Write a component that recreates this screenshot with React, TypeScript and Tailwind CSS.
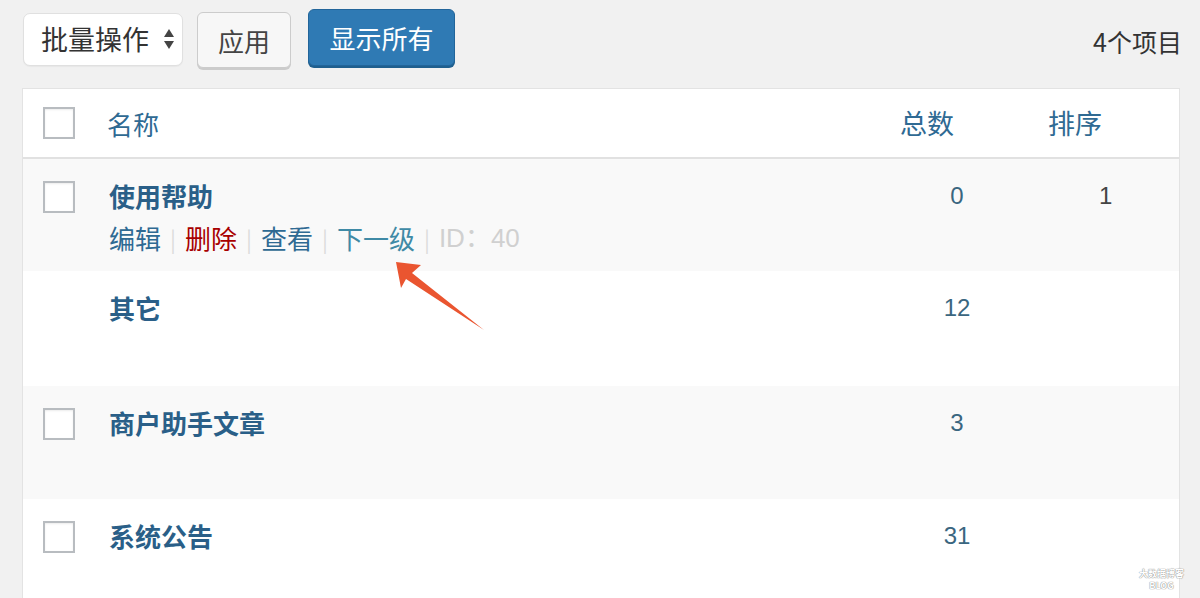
import React from "react";

const font = { fontFamily: '"Noto Sans CJK SC", "Noto Sans", sans-serif' };

function Box() {
  return (
    <div className="w-[32px] h-[32px] border-2 border-[#b8bcc0] bg-white shadow-[inset_0_1px_2px_rgba(0,0,0,0.08)]" />
  );
}

type Row = { name: string; count: string; order?: string; check: boolean; actions?: boolean; bg: string; h: string };

const rows: Row[] = [
  { name: "使用帮助", count: "0", order: "1", check: true, actions: true, bg: "bg-[#f9f9f9]", h: "h-[112px]" },
  { name: "其它", count: "12", check: false, bg: "bg-white", h: "h-[115px]" },
  { name: "商户助手文章", count: "3", check: true, bg: "bg-[#f9f9f9]", h: "h-[113px]" },
  { name: "系统公告", count: "31", check: true, bg: "bg-white", h: "h-[120px]" },
];

function Sep() {
  return <span className="mx-[9px] text-[#dcdcdc] text-[22px]">|</span>;
}

export default function App() {
  return (
    <div className="relative w-[1200px] h-[598px] overflow-hidden bg-[#f1f1f1] text-[#444]" style={font}>
      <div className="flex items-center h-[80px] pl-[23px] pr-[18px]">
        <div className="flex items-center w-[160px] h-[53px] mt-[-2px] bg-white border border-[#e0e0e0] rounded-[7px] pl-[17px] pr-[7px] justify-between text-[27px] text-[#333] shadow-[0_1px_1px_rgba(0,0,0,0.04)]">
          <span>批量操作</span>
          <svg width="12" height="26" viewBox="0 0 12 26">
            <path d="M6 3 L11 11 L1 11 Z" fill="#444" />
            <path d="M6 23 L11 15 L1 15 Z" fill="#444" />
          </svg>
        </div>
        <div className="ml-[14px] flex items-center justify-center w-[94px] h-[56px] bg-[#f7f7f7] border border-[#cccccc] rounded-[6px] text-[26px] text-[#444] shadow-[0_2px_0_#cccccc]">
          应用
        </div>
        <div className="ml-[17px] mt-[-5px] flex items-center justify-center w-[147px] h-[57px] bg-[#2f7ab4] border border-[#22659a] rounded-[6px] text-[26px] text-white shadow-[0_2px_0_#1f5f8e]">
          显示所有
        </div>
        <div className="ml-auto text-[25px] text-[#333] mt-[4px]">4个项目</div>
      </div>

      <div className="ml-[22px] w-[1158px] mt-[8px] border border-[#e3e3e3] bg-white">
        <div className="flex items-center h-[70px] border-b-2 border-[#e1e1e1]">
          <div className="w-[84px] pl-[20px] flex items-center"><Box /></div>
          <div className="flex-1 text-[26px] text-[#2f6a93]">名称</div>
          <div className="w-[136px] pl-[11px] text-[27px] text-[#2f6a93]">总数</div>
          <div className="w-[154px] pl-[23px] text-[27px] text-[#2f6a93]">排序</div>
        </div>
        {rows.map((r, i) => (
          <div key={i} className={`flex items-start ${r.bg} ${r.h} pt-[19px]`}>
            <div className="w-[84px] pl-[20px] pt-[2px] h-[36px] flex items-center">{r.check ? <Box /> : null}</div>
            <div className="flex-1 pl-[2px]">
              <div className="text-[26px] leading-[36px] font-bold text-[#2a5f88]">{r.name}</div>
              {r.actions ? (
                <div className="mt-[4px] leading-[40px] text-[26px] flex items-center">
                  <span className="text-[#2f6a93]">编辑</span>
                  <Sep />
                  <span className="text-[#a80000]">删除</span>
                  <Sep />
                  <span className="text-[#2f6a93]">查看</span>
                  <Sep />
                  <span className="text-[#3f8aa6]">下一级</span>
                  <Sep />
                  <span className="text-[#d0d0d0]" style={{ fontFamily: '"Liberation Sans", "Noto Sans CJK SC", sans-serif' }}>ID：40</span>
                </div>
              ) : null}
            </div>
            <div className="w-[136px] text-center text-[24px] leading-[36px] text-[#3a6680]" style={{ fontFamily: '"Liberation Sans", sans-serif' }}>{r.count}</div>
            <div className="w-[154px] pl-[74px] text-[24px] leading-[36px] text-[#444]" style={{ fontFamily: '"Liberation Sans", sans-serif' }}>{r.order ?? ""}</div>
          </div>
        ))}
      </div>

      <svg className="absolute left-0 top-0 pointer-events-none" width="1200" height="598">
        <polygon points="396,262 421,265 412,273 484,330 406,279 401,288" fill="#ea5530" />
      </svg>

      <div className="absolute right-[16px] bottom-[6px] flex flex-col items-center text-[9px] font-bold text-white [text-shadow:0_0_1px_#888,0_0_1px_#888]">
        <span className="leading-[12px]">大数据博客</span>
        <span className="leading-[12px]">BLOG</span>
      </div>
    </div>
  );
}
